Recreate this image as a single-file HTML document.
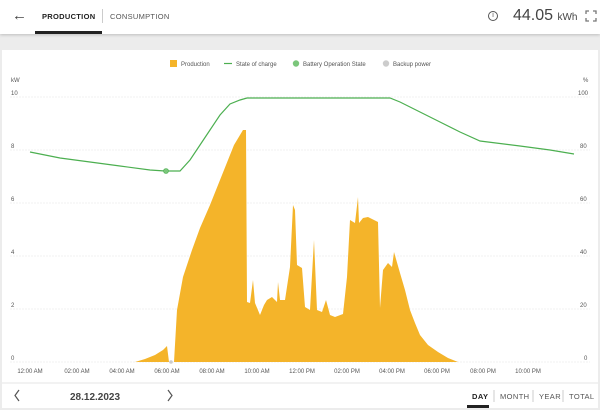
<!DOCTYPE html>
<html><head><meta charset="utf-8"><style>
*{margin:0;padding:0;box-sizing:border-box}
body{width:600px;height:410px;background:#ececec;font-family:"Liberation Sans",sans-serif;position:relative;overflow:hidden;color:#333}
.hdr{position:absolute;left:0;top:0;width:600px;height:34px;background:#fff;box-shadow:0 1px 3px rgba(0,0,0,.2)}
.card{position:absolute;left:2px;top:50px;width:596px;height:358px;background:#fff}
.t{position:absolute;white-space:nowrap}
</style></head><body>
<div class="hdr">
 <div class="t" style="left:12px;top:7px;font-size:15px;color:#444">←</div>
 <div class="t" style="left:42px;top:12px;font-size:7.5px;font-weight:bold;letter-spacing:.3px;color:#222">PRODUCTION</div>
 <div style="position:absolute;left:102px;top:9px;width:1px;height:14px;background:#ccc"></div>
 <div class="t" style="left:110px;top:12px;font-size:7.5px;letter-spacing:.3px;color:#555">CONSUMPTION</div>
 <div style="position:absolute;left:35px;top:31px;width:67px;height:3px;background:#222"></div>
 <div style="position:absolute;left:488px;top:11px;width:10px;height:10px;border:1px solid #555;border-radius:50%;font-size:7px;text-align:center;line-height:8px;color:#555">i</div>
 <div class="t" style="left:513px;top:7px;font-size:16px;color:#444">44.05 <span style="font-size:10px">kWh</span></div>
 <svg style="position:absolute;left:585px;top:10px" width="12" height="12"><path d="M1 4V1H4M8 1H11V4M11 8V11H8M4 11H1V8" fill="none" stroke="#777" stroke-width="1.3"/></svg>
</div>
<div class="card"></div>
<svg style="position:absolute;left:0;top:0" width="600" height="410" font-family="Liberation Sans" font-size="6" fill="#555">
 <rect x="170" y="60" width="7" height="7" fill="#f4b42a"/><text x="181" y="66">Production</text>
 <line x1="224" y1="63.5" x2="232" y2="63.5" stroke="#4caf50" stroke-width="1.2"/><text x="236" y="66">State of charge</text>
 <circle cx="296" cy="63.5" r="3.2" fill="#7bc67b"/><text x="303" y="66">Battery Operation State</text>
 <circle cx="386" cy="63.5" r="3.2" fill="#ccc"/><text x="393" y="66">Backup power</text>
 <text x="11" y="82">kW</text><text x="583" y="82">%</text>
 <g stroke="#ececec" stroke-width="0.8" stroke-dasharray="2 1">
 <line x1="10" y1="97" x2="590" y2="97"/><line x1="10" y1="150" x2="590" y2="150"/><line x1="10" y1="203" x2="590" y2="203"/><line x1="10" y1="256" x2="590" y2="256"/><line x1="10" y1="309" x2="590" y2="309"/><line x1="10" y1="362" x2="590" y2="362"/>
 </g>
 <g font-size="6"><text x="11" y="95">10</text><text x="11" y="148">8</text><text x="11" y="201">6</text><text x="11" y="254">4</text><text x="11" y="307">2</text><text x="11" y="360">0</text>
 <text x="578" y="95">100</text><text x="580" y="148">80</text><text x="580" y="201">60</text><text x="580" y="254">40</text><text x="580" y="307">20</text><text x="584" y="360">0</text></g>
 <polygon fill="#f4b42a" points="135,362 145,359 155,355 163,350 167,346 169,362 174,362 177,310 183,277 192,250 200,228 210,205 220,180 228,160 234,145 240,135 243,130 246,130 247,302 250,303 253,280 255,303 260,315 264,305 267,300 272,297 277,302 278,282 280,300 285,300 290,267 293,205 295,210 297,265 302,268 305,307 310,310 314,240 317,310 322,312 326,300 330,315 335,317 343,314 347,277 350,220 355,223 358,197 359,223 363,218 368,217 378,222 380,308 383,270 388,263 392,267 394,252 400,273 405,290 410,310 415,323 420,335 428,345 438,352 448,358 458,362"/>
 <polyline fill="none" stroke="#4caf50" stroke-width="1.2" points="30,152 60,158 90,162 120,166 150,170 165,171 180,171 190,160 200,145 210,130 220,115 230,104 240,100 247,98 300,98 390,98 400,102 420,112 440,122 460,132 480,141 520,146 550,150 574,154"/>
 <circle cx="166" cy="171" r="2.5" fill="#7bc67b" stroke="#4caf50" stroke-width=".6"/>
 <circle cx="171" cy="362" r="1.8" fill="#ccc"/>
 <g font-size="6" text-anchor="middle">
 <text x="30" y="373">12:00 AM</text><text x="77" y="373">02:00 AM</text><text x="122" y="373">04:00 AM</text><text x="167" y="373">06:00 AM</text><text x="212" y="373">08:00 AM</text><text x="257" y="373">10:00 AM</text><text x="302" y="373">12:00 PM</text><text x="347" y="373">02:00 PM</text><text x="392" y="373">04:00 PM</text><text x="437" y="373">06:00 PM</text><text x="483" y="373">08:00 PM</text><text x="528" y="373">10:00 PM</text></g>
 <line x1="2" y1="383" x2="598" y2="383" stroke="#e6e6e6"/>
 <path d="M19 390 L15 395.5 L19 401" fill="none" stroke="#555" stroke-width="1.2"/>
 <path d="M168 390 L172 395.5 L168 401" fill="none" stroke="#555" stroke-width="1.2"/>
 <text x="70" y="400" font-size="10" font-weight="bold" fill="#444">28.12.2023</text>
 <g font-size="7.5" letter-spacing=".4"><text x="472" y="399" font-weight="bold" fill="#222">DAY</text><text x="500" y="399">MONTH</text><text x="539" y="399">YEAR</text><text x="569" y="399">TOTAL</text></g>
 <g stroke="#ccc"><line x1="494" y1="390" x2="494" y2="402"/><line x1="533" y1="390" x2="533" y2="402"/><line x1="563" y1="390" x2="563" y2="402"/></g>
 <rect x="467" y="405" width="22" height="3" fill="#222"/>
</svg>
</body></html>
